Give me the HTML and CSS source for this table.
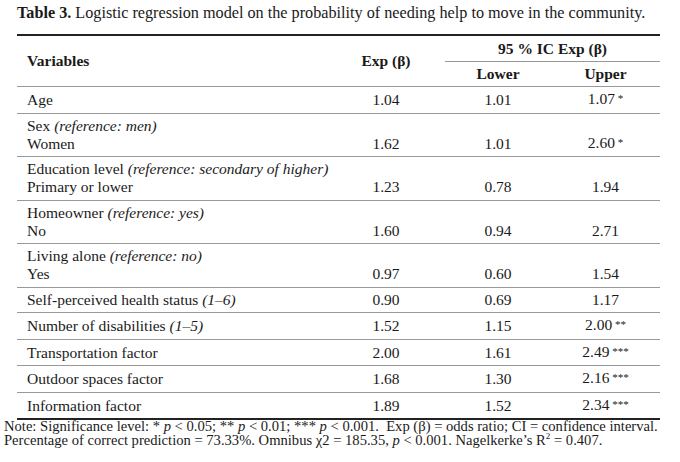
FILE: index.html
```html
<!DOCTYPE html>
<html>
<head>
<meta charset="utf-8">
<link rel="stylesheet" href="styles.css">
</head>
<body>
<div class="page">
  <div class="caption"><b>Table 3.</b> Logistic regression model on the probability of needing help to move in the community.</div>
  <table class="reg">
    <colgroup>
      <col class="c-var"><col class="c-exp"><col class="c-low"><col class="c-up">
    </colgroup>
    <thead>
      <tr class="h1">
        <th rowspan="2" class="var">Variables</th>
        <th rowspan="2">Exp (β)</th>
        <th colspan="2" class="span">95 % IC Exp (β)</th>
      </tr>
      <tr class="h2">
        <th>Lower</th>
        <th>Upper</th>
      </tr>
    </thead>
    <tbody>
      <tr><td class="var">Age</td><td>1.04</td><td>1.01</td><td>1.07<span class="sig"> *</span></td></tr>
      <tr class="dbl"><td class="var">Sex <i>(reference: men)</i><br>Women</td><td>1.62</td><td>1.01</td><td>2.60<span class="sig"> *</span></td></tr>
      <tr class="dbl"><td class="var">Education level <i>(reference: secondary of higher)</i><br>Primary or lower</td><td>1.23</td><td>0.78</td><td>1.94</td></tr>
      <tr class="dbl"><td class="var">Homeowner <i>(reference: yes)</i><br>No</td><td>1.60</td><td>0.94</td><td>2.71</td></tr>
      <tr class="dbl"><td class="var">Living alone <i>(reference: no)</i><br>Yes</td><td>0.97</td><td>0.60</td><td>1.54</td></tr>
      <tr><td class="var">Self-perceived health status <i>(1–6)</i></td><td>0.90</td><td>0.69</td><td>1.17</td></tr>
      <tr><td class="var">Number of disabilities <i>(1–5)</i></td><td>1.52</td><td>1.15</td><td>2.00<span class="sig"> **</span></td></tr>
      <tr><td class="var">Transportation factor</td><td>2.00</td><td>1.61</td><td>2.49<span class="sig"> ***</span></td></tr>
      <tr><td class="var">Outdoor spaces factor</td><td>1.68</td><td>1.30</td><td>2.16<span class="sig"> ***</span></td></tr>
      <tr class="last"><td class="var">Information factor</td><td>1.89</td><td>1.52</td><td>2.34<span class="sig"> ***</span></td></tr>
    </tbody>
  </table>
  <div class="note">
    <div>Note: Significance level: * <i>p</i> &lt; 0.05; ** <i>p</i> &lt; 0.01; *** <i>p</i> &lt; 0.001.&nbsp; Exp (β) = odds ratio; CI = confidence interval.</div>
    <div>Percentage of correct prediction = 73.33%. Omnibus χ2 = 185.35, <i>p</i> &lt; 0.001. Nagelkerke’s R<sup>2</sup> = 0.407.</div>
  </div>
</div>
</body>
</html>
```

FILE: styles.css
```css
html, body {
  margin: 0;
  padding: 0;
  background: #ffffff;
}

.page {
  width: 680px;
  height: 462px;
  color: #1a1a1a;
  font-family: "Liberation Serif", "Times New Roman", serif;
}

.caption {
  padding: 4px 0 0 17px;
  font-size: 16.2px;
  line-height: 18px;
  white-space: nowrap;
}

.reg {
  margin: 12px 0 0 17px;
  width: 643px;
  border-collapse: collapse;
  table-layout: fixed;
  font-size: 15.5px;
  line-height: 18px;
  border-top: 2px solid #222;
  border-bottom: 2px solid #222;
}

.c-var { width: 310px; }
.c-exp { width: 118px; }
.c-low { width: 106px; }
.c-up  { width: 109px; }

.reg th,
.reg td {
  padding: 3px 0 3.5px 0;
  text-align: center;
  white-space: nowrap;
  overflow: visible;
  vertical-align: bottom;
}

.reg th {
  font-weight: bold;
  vertical-align: middle;
}

.reg th.var,
.reg td.var {
  text-align: left;
  padding-left: 10px;
}

.reg thead tr.h1 th.span {
  border-bottom: 1px solid #999;
  padding: 4px 0 3px 0;
}

.reg thead tr.h2 th {
  padding: 3px 0 3px 0;
}

.reg thead tr:last-child th,
.reg thead th[rowspan] {
  border-bottom: 1px solid #999;
}

.reg tbody tr td {
  border-bottom: 1px solid #999;
}

.reg tbody tr.last td {
  border-bottom: none;
}

.sig {
  font-size: 11px;
  position: relative;
  top: -2px;
}

.note {
  margin-left: 4px;
  font-size: 14.6px;
  line-height: 13.5px;
  white-space: nowrap;
}

.note sup {
  font-size: 9px;
  line-height: 0;
}
```
